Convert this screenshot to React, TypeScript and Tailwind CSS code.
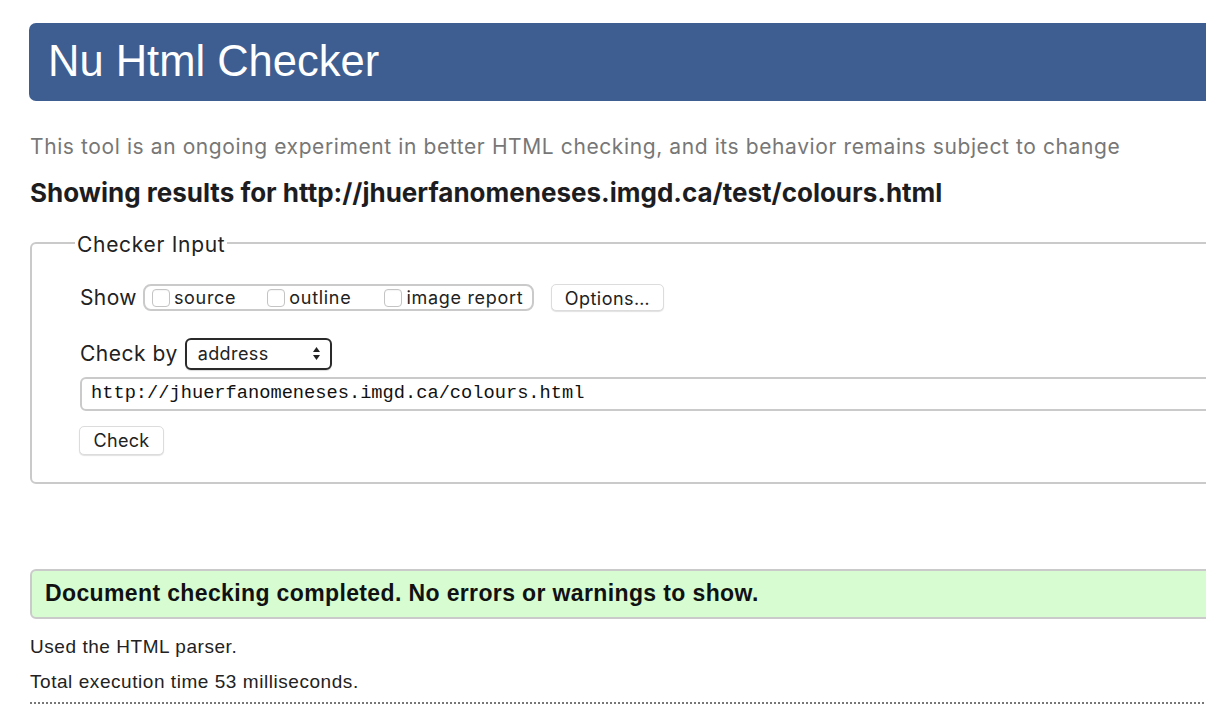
import React from "react";

const sans = { fontFamily: '"Liberation Sans", Arial, sans-serif' };
const ui = { fontFamily: 'Inter, "Liberation Sans", Arial, sans-serif' };

function Box({ label, gap }: { label: string; gap: string }) {
  return (
    <label className={`flex items-center ${gap}`}>
      <span className="h-[18px] w-[18px] rounded-[4px] border border-[#c4c4c4] bg-white shadow-[inset_0_1px_1px_rgba(0,0,0,0.04)]" />
      <span className="ml-[4px] text-[18px] tracking-[0.7px] text-[#222]" style={ui}>
        {label}
      </span>
    </label>
  );
}

function Btn({ children, className }: { children: React.ReactNode; className?: string }) {
  return (
    <button
      type="button"
      style={ui}
      className={`rounded-[5px] border border-[#dcdcdc] bg-white text-[18px] text-[#222] shadow-[0_1px_1px_rgba(0,0,0,0.12)] ${className ?? ""}`}
    >
      {children}
    </button>
  );
}

export default function App() {
  return (
    <div className="h-[720px] w-[1206px] overflow-hidden bg-white" style={sans}>
      <div className="w-[1260px] pl-[29px] pt-[23px]">
        <div className="flex h-[78px] items-center rounded-l-[7px] bg-[#3e5e92] pl-[19px]">
          <h1 className="text-[43.5px] leading-none text-white">Nu Html Checker</h1>
        </div>

        <div className="pl-[1px]">
          <p className="mt-[32px] text-[21px] leading-[28px] tracking-[0.6px] text-[#777]" style={ui}>
            This tool is an ongoing experiment in better HTML checking, and its behavior remains subject to change
          </p>
          <h2 className="mt-[16px] text-[26px] font-bold leading-[32px] text-[#1d1d1f]" style={ui}>
            Showing results for http://jhuerfanomeneses.imgd.ca/test/colours.html
          </h2>

          <fieldset className="mt-[20px] rounded-l-[6px] border-2 border-[#cacaca] pb-[27px]">
            <legend
              className="ml-[43px] px-[2px] pt-[4px] text-[21px] leading-[24px] tracking-[0.7px] text-[#222]"
              style={ui}
            >
              Checker Input
            </legend>

            <div className="pl-[48px]">
              <div className="mt-[25px] flex items-center">
                <span className="text-[21px] tracking-[0.4px] text-[#222]" style={ui}>
                  Show
                </span>
                <div className="ml-[6px] flex h-[27px] w-[391px] items-center rounded-[8px] border-2 border-[#cacaca] pl-[7px]">
                  <Box label="source" gap="" />
                  <Box label="outline" gap="ml-[31px]" />
                  <Box label="image report" gap="ml-[33px]" />
                </div>
                <Btn className="ml-[17px] h-[27px] w-[113px] tracking-[0.5px]">Options…</Btn>
              </div>

              <div className="mt-[24px] flex items-center">
                <span className="text-[21px] tracking-[0.5px] text-[#222]" style={ui}>
                  Check by
                </span>
                <div className="ml-[7px] flex h-[32px] w-[147px] items-center justify-between rounded-[6px] border-2 border-[#2a2a2a] bg-white pl-[11px] pr-[9px] shadow-[0_1px_1px_rgba(0,0,0,0.15)]">
                  <span className="text-[18px] tracking-[0.4px] text-[#222]" style={ui}>
                    address
                  </span>
                  <svg width="9" height="15" viewBox="0 0 9 15">
                    <path d="M4.5 1 L8 6 H1 Z" fill="#222" />
                    <path d="M4.5 14 L8 9 H1 Z" fill="#222" />
                  </svg>
                </div>
              </div>

              <div className="mt-[7px] flex h-[34px] items-center rounded-l-[6px] border-2 border-[#cacaca] pl-[9px]">
                <span
                  className="text-[18.7px] text-[#111]"
                  style={{ fontFamily: '"Liberation Mono", "DejaVu Sans Mono", monospace' }}
                >
                  http://jhuerfanomeneses.imgd.ca/colours.html
                </span>
              </div>

              <Btn className="ml-[-1px] mt-[15px] h-[29px] w-[85px] tracking-[0.3px]">Check</Btn>
            </div>
          </fieldset>

          <div className="mt-[85px] flex h-[50px] items-center rounded-l-[6px] border-2 border-[#cacaca] bg-[#d7fcd2] pl-[13px]">
            <p className="text-[23px] font-bold tracking-[0.37px] text-[#111]">
              Document checking completed. No errors or warnings to show.
            </p>
          </div>

          <p className="mt-[10px] text-[19px] leading-[35px] tracking-[0.55px] text-[#222]">Used the HTML parser.</p>
          <p className="text-[19px] leading-[35px] tracking-[0.55px] text-[#222]">Total execution time 53 milliseconds.</p>
          <div className="mt-[3px] border-t-2 border-dotted border-[#777]" />
        </div>
      </div>
    </div>
  );
}
